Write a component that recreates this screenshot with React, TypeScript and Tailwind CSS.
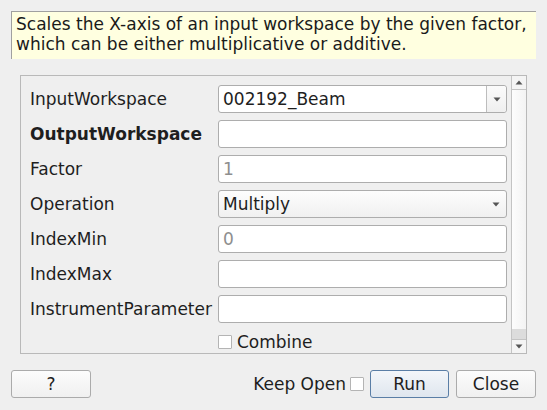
import React from 'react';

const font = { fontFamily: '"DejaVu Sans", "Noto Sans", sans-serif' };

const DownTriangle: React.FC = () => (
  <svg width="8" height="5" viewBox="0 0 8 5">
    <path d="M0.5 0.5 L7.5 0.5 L4 4.5 Z" fill="#555555" />
  </svg>
);

const UpTriangle: React.FC = () => (
  <svg width="8" height="5" viewBox="0 0 8 5">
    <path d="M0.5 4.5 L7.5 4.5 L4 0.5 Z" fill="#555555" />
  </svg>
);

const TextField: React.FC<{ value?: string; muted?: boolean }> = ({ value, muted }) => (
  <div className="h-[28px] w-[289px] rounded-[3px] border border-[#adadad] bg-white pl-[4px] flex items-center">
    <span className={muted ? 'text-[#8e8e8e]' : 'text-[#1e1e1e]'}>{value}</span>
  </div>
);

const EditableCombo: React.FC<{ value: string }> = ({ value }) => (
  <div className="h-[28px] w-[289px] rounded-[3px] border border-[#adadad] bg-white flex items-center">
    <span className="pl-[4px] flex-1 text-[#1e1e1e]">{value}</span>
    <div className="h-full w-[20px] border-l border-[#bdbdbd] bg-gradient-to-b from-[#fbfbfb] to-[#efefef] rounded-r-[3px] flex items-center justify-center">
      <DownTriangle />
    </div>
  </div>
);

const Combo: React.FC<{ value: string }> = ({ value }) => (
  <div className="h-[28px] w-[289px] rounded-[3px] border border-[#adadad] bg-gradient-to-b from-[#fdfdfd] to-[#f0f0f0] flex items-center">
    <span className="pl-[4px] flex-1 text-[#1e1e1e]">{value}</span>
    <div className="w-[20px] flex items-center justify-center">
      <DownTriangle />
    </div>
  </div>
);

const Row: React.FC<{ label: string; bold?: boolean; children: React.ReactNode }> = ({ label, bold, children }) => (
  <div className="flex items-center h-[28px]">
    <div className={`w-[188px] text-[#1e1e1e] ${bold ? 'font-bold' : ''}`}>{label}</div>
    {children}
  </div>
);

const Checkbox: React.FC = () => (
  <div className="w-[14px] h-[14px] border border-[#b4b4b4] bg-white rounded-[1px]" />
);

export default function App() {
  return (
    <div className="w-[547px] h-[410px] bg-[#efefef] text-[17px] leading-[20px] overflow-hidden" style={font}>
      {/* Description */}
      <div className="pt-[11px] px-[11px]">
        <div className="h-[48px] w-[525px] bg-[#ffffe0] border-t border-l border-[#a0a0a0] pl-[4px] pt-[2px] leading-[20px] text-[#1a1a1a] whitespace-nowrap">
          Scales the X-axis of an input workspace by the given factor,
          <br />
          which can be either multiplicative or additive.
        </div>
      </div>

      {/* Property frame */}
      <div className="mt-[16px] ml-[20px] w-[507px] h-[279px] border border-[#b9b9b9] flex">
        <div className="flex-1 pl-[9px] pt-[9px] flex flex-col gap-[7px]">
          <Row label="InputWorkspace">
            <EditableCombo value="002192_Beam" />
          </Row>
          <Row label="OutputWorkspace" bold>
            <TextField />
          </Row>
          <Row label="Factor">
            <TextField value="1" muted />
          </Row>
          <Row label="Operation">
            <Combo value="Multiply" />
          </Row>
          <Row label="IndexMin">
            <TextField value="0" muted />
          </Row>
          <Row label="IndexMax">
            <TextField />
          </Row>
          <Row label="InstrumentParameter">
            <TextField />
          </Row>
          <div className="flex items-center h-[26px] pl-[188px] gap-[5px] text-[#1e1e1e]">
            <Checkbox />
            <span>Combine</span>
          </div>
        </div>

        {/* Scrollbar */}
        <div className="w-[15px] h-full border-l border-[#c4c4c4] flex flex-col">
          <div className="h-[14px] border-b border-[#c4c4c4] bg-[#f4f4f4] flex items-center justify-center">
            <UpTriangle />
          </div>
          <div className="flex-1 bg-gradient-to-r from-[#fdfdfd] to-[#f3f3f3]" />
          <div className="h-[10px] bg-[#dcdcdc]" />
          <div className="h-[14px] border-t border-[#c4c4c4] bg-[#f4f4f4] flex items-center justify-center">
            <DownTriangle />
          </div>
        </div>
      </div>

      {/* Bottom buttons */}
      <div className="mt-[16px] px-[11px] flex items-center h-[28px] text-[#1e1e1e]">
        <button className="w-[80px] h-[28px] rounded-[3px] border border-[#ababab] bg-gradient-to-b from-[#fcfcfc] to-[#f0f0f0]">
          ?
        </button>
        <div className="flex-1" />
        <span className="mr-[4px]">Keep Open</span>
        <Checkbox />
        <button className="ml-[6px] w-[79px] h-[28px] rounded-[3px] border border-[#5a7ea6] bg-gradient-to-b from-[#f3f6fa] to-[#dfe6ee]">
          Run
        </button>
        <button className="ml-[7px] w-[80px] h-[28px] rounded-[3px] border border-[#ababab] bg-gradient-to-b from-[#fcfcfc] to-[#f0f0f0]">
          Close
        </button>
      </div>
    </div>
  );
}
